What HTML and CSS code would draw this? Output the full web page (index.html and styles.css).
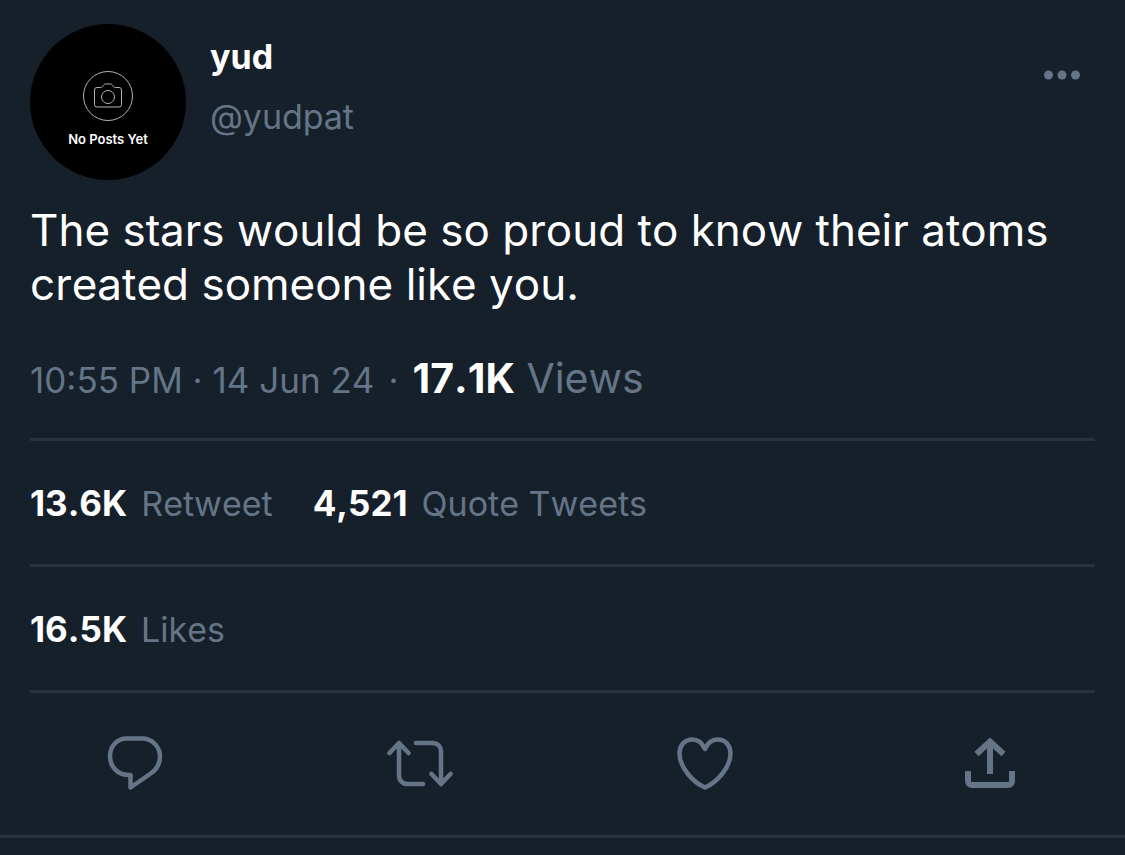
FILE: index.html
```
<!DOCTYPE html>
<html lang="en">
<head>
    <meta charset="UTF-8">
    <meta name="viewport" content="width=device-width, initial-scale=1.0">
    <title>yud (@yudpat)</title>
    <link rel="stylesheet" href="styles.css">
</head>
<body>
    <article class="tweet">
        <header class="head">
            <div class="avatar">
                <svg class="camera" viewBox="0 0 52 52" aria-hidden="true">
                    <circle cx="26" cy="26" r="24.5"/>
                    <path d="M15 17.5h3.5c1.5 0 2-.8 2.8-2 .6-1 1.2-1.5 2.5-1.5h4.4c1.3 0 1.9.5 2.5 1.5.8 1.2 1.3 2 2.8 2H37a2.5 2.5 0 0 1 2.5 2.5v14.5a2.5 2.5 0 0 1-2.5 2.5H15a2.5 2.5 0 0 1-2.5-2.5V20a2.5 2.5 0 0 1 2.5-2.5z"/>
                    <circle cx="26" cy="27" r="6.5"/>
                </svg>
                <span>No Posts Yet</span>
            </div>
            <div class="user">
                <strong class="name">yud</strong>
                <span class="handle">@yudpat</span>
            </div>
            <button class="more" type="button" aria-label="More">
                <svg viewBox="0 0 36 10" aria-hidden="true">
                    <circle cx="4.5" cy="5" r="4.5"/>
                    <circle cx="18" cy="5" r="4.5"/>
                    <circle cx="31.5" cy="5" r="4.5"/>
                </svg>
            </button>
        </header>
        <p class="text">The stars would be so proud to know their atoms created someone like you.</p>
        <div class="meta">
            <time>10:55 PM · 14 Jun 24</time>
            <span class="dot">·</span>
            <span class="views"><b>17.1K</b> Views</span>
        </div>
        <div class="row">
            <span class="stat"><b>13.6K</b>Retweet</span>
            <span class="stat"><b>4,521</b>Quote Tweets</span>
        </div>
        <div class="row">
            <span class="stat"><b>16.5K</b>Likes</span>
        </div>
        <footer class="actions">
            <button type="button" aria-label="Reply">
                <svg viewBox="0 0 66 60" aria-hidden="true">
                    <path d="M25 5.5h15c10 0 18 8 18 18 0 8-4 13.5-10 17.5L28.5 54.5V42H26C16 42 8 34 8 23.5 8 13 15 5.5 25 5.5z"/>
                </svg>
            </button>
            <button type="button" aria-label="Retweet">
                <svg class="round" viewBox="0 0 66 60" aria-hidden="true">
                    <path d="M2.5 20L12 10l9.5 10M12 11v32a8 8 0 0 0 8 8h16"/>
                    <path d="M29 10h17a8 8 0 0 1 8 8v32M44.5 41L54 51l9.5-10"/>
                </svg>
            </button>
            <button type="button" aria-label="Like">
                <svg viewBox="0 0 66 60" aria-hidden="true">
                    <path d="M33 16C30 9.500 25 6.500 20.500 6.500 12 6.500 7.500 13 7.500 20.500 7.500 35 22 50 33 54.500c11-4.500 25.500-19.500 25.500-34C58.500 13 54 6.500 45.500 6.500 41 6.500 36 9.500 33 16z"/>
                </svg>
            </button>
            <button type="button" aria-label="Share">
                <svg class="share" viewBox="0 0 66 60" aria-hidden="true">
                    <path d="M19.5 21L33 8.5 46.5 21M33 9v32"/>
                    <path d="M11 38v10a4 4 0 0 0 4 4h36a4 4 0 0 0 4-4V38"/>
                </svg>
            </button>
        </footer>
    </article>
</body>
</html>
```
FILE: styles.css
```
*{
    margin: 0;
    padding: 0;
    box-sizing: border-box;
}
body{
    background: #16202a;
    color: #fff;
    font-family: Inter, "Liberation Sans", sans-serif;
    font-size: 34px;
    line-height: 42px;
    font-kerning: none;
}
button{
    border: 0;
    background: none;
    cursor: pointer;
}
svg{
    display: block;
}
.tweet{
    padding: 24px 30px 0;
    border-bottom: 3px solid #28323c;
}
/* 头部 */
.head{
    display: flex;
    gap: 24px;
}
.avatar{
    flex: none;
    width: 156px;
    height: 156px;
    padding-top: 46px;
    border-radius: 50%;
    background: #000;
    display: flex;
    flex-direction: column;
    align-items: center;
    gap: 8px;
    font-size: 13px;
    line-height: 18px;
    font-weight: 600;
    font-kerning: normal;
}
.camera{
    width: 52px;
    height: 52px;
    fill: none;
    stroke: #b4b4b4;
    stroke-width: 1;
}
.user{
    flex: 1;
    padding-top: 12px;
    display: flex;
    flex-direction: column;
    gap: 18px;
}
.name{
    font-weight: 700;
}
.handle,
.meta,
.row{
    color: #657587;
}
.more{
    align-self: flex-start;
    margin: 46px 15px 0 0;
}
.more svg{
    width: 36px;
    height: 10px;
    fill: #657587;
}
.text{
    margin-top: 23px;
    font-size: 44px;
    line-height: 54px;
}
.meta{
    display: flex;
    align-items: baseline;
    flex-wrap: wrap;
    padding: 40px 0 33px;
    font-size: 35px;
}
.dot{
    margin: 0 14px;
}
.views{
    font-size: 41px;
    line-height: 54px;
}
.meta b,
.row b{
    color: #fff;
    font-weight: 700;
}
.row{
    display: flex;
    flex-wrap: wrap;
    gap: 0 40px;
    padding: 41px 0 39px;
    border-top: 3px solid #28323c;
}
.stat b{
    margin-right: 14px;
    font-size: 35px;
}
/* 操作按钮 */
.actions{
    display: flex;
    justify-content: space-between;
    padding: 40px 72px 42px;
    border-top: 3px solid #28323c;
}
.actions svg{
    width: 66px;
    height: 60px;
    fill: none;
    stroke: #657587;
    stroke-width: 4.5;
    stroke-linejoin: round;
}
.actions .round{
    stroke-linecap: round;
}
.actions .share{
    stroke-width: 6;
    stroke-linejoin: miter;
}
```
